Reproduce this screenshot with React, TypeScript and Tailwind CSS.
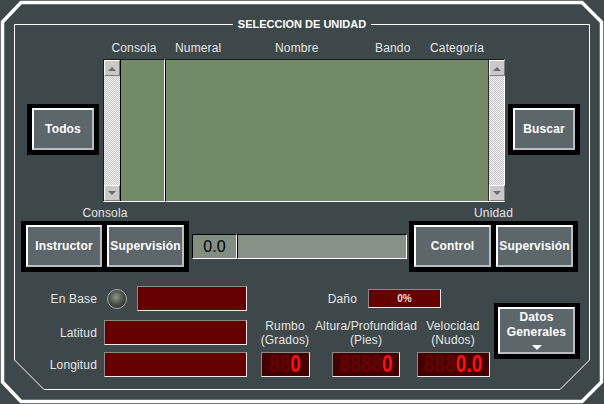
import type { ReactNode } from "react";

const FONT = "font-['Liberation_Sans',Arial,sans-serif]";

function Btn({ children, className = "" }: { children: ReactNode; className?: string }) {
  return (
    <div className={`flex flex-col items-center justify-center border-2 border-t-white border-l-white border-r-[#b9bdbf] border-b-[#b9bdbf] bg-[#5d676b] text-[12px] font-bold leading-[15px] text-white ${className}`}>
      {children}
    </div>
  );
}

function ScrollBtn({ up }: { up?: boolean }) {
  return (
    <div className="flex h-[16px] w-[16px] items-center justify-center border border-t-white border-l-white border-r-[#7c7c7c] border-b-[#7c7c7c] bg-[#c9c9c9]">
      <svg width="8" height="5" viewBox="0 0 8 5">
        <path d={up ? "M0 5 L4 1 L8 5 Z" : "M0 0 L8 0 L4 4 Z"} fill="#6b6b6b" />
      </svg>
    </div>
  );
}

function ScrollBar({ className = "" }: { className?: string }) {
  return (
    <div className={`flex w-[16px] flex-col justify-between bg-[repeating-conic-gradient(#c4c4c4_0%_25%,#f6f6f6_0%_50%)] [background-size:2px_2px] ${className}`}>
      <ScrollBtn up />
      <ScrollBtn />
    </div>
  );
}

function RedField({ className = "", children }: { className?: string; children?: ReactNode }) {
  return (
    <div className={`flex items-center justify-center border border-t-[#8a8a8a] border-l-[#8a8a8a] border-r-[#f2eaea] border-b-[#f2eaea] bg-[#660000] ${className}`}>
      {children}
    </div>
  );
}

function Led({ dim, lit, w }: { dim: string; lit: string; w: string }) {
  return (
    <div className={`flex h-[25px] items-center justify-center border border-t-[#8a8a8a] border-l-[#8a8a8a] border-r-[#f2eaea] border-b-[#f2eaea] bg-[#420000] ${w}`}>
      <span className="inline-block scale-y-[1.22] text-[19px] font-bold leading-none">
        <span className="text-[#6c0000]">{dim}</span>
        <span className="text-[#ff1010]">{lit}</span>
      </span>
    </div>
  );
}

function Gauge({ l1, l2, dim, lit, w, col }: { l1: string; l2: string; dim: string; lit: string; w: string; col: string }) {
  return (
    <div className={`flex flex-col items-center ${col}`}>
      <div className="text-center text-[12px] leading-[13.5px] text-[#e4e6e6]">
        {l1}
        <br />
        {l2}
      </div>
      <div className="mt-[5px]">
        <Led dim={dim} lit={lit} w={w} />
      </div>
    </div>
  );
}

export default function App() {
  return (
    <div className={`relative h-[404px] w-[604px] overflow-hidden bg-[#3e4749] ${FONT} tracking-[0.15px]`}>
      <svg className="absolute inset-0" width="604" height="404" viewBox="0 0 604 404">
        <polygon points="21,2.5 582,2.5 601.5,22 601.5,382 582,401.5 21,401.5 2.5,382 2.5,22" fill="none" stroke="#ffffff" strokeWidth="3.5" />
        <polygon points="14.5,24.5 589.5,24.5 589.5,360 560,389.5 44,389.5 14.5,360" fill="none" stroke="#ffffff" strokeWidth="1" />
      </svg>

      <div className="relative flex flex-col pt-[17px]">
        <div className="flex h-[14px] justify-center">
          <span className="bg-[#3e4749] px-[5px] text-[11px] font-bold leading-[14px] tracking-normal text-white">SELECCION DE UNIDAD</span>
        </div>

        <div className="mt-[10px] ml-[103px] flex h-[14px] text-[12px] leading-[14px] text-[#e4e6e6]">
          <span className="w-[62px] text-center">Consola</span>
          <span className="ml-[10px] w-[100px]">Numeral</span>
          <span className="w-[100px]">Nombre</span>
          <span className="w-[55px]">Bando</span>
          <span>Categoría</span>
        </div>

        <div className="mt-[4px] flex h-[143px] items-start">
          <div className="mt-[45px] ml-[27px] flex h-[51px] w-[72px] bg-black pt-[4px] pr-[5px] pb-[5px] pl-[5px]">
            <Btn className="flex-1">Todos</Btn>
          </div>
          <div className="ml-[4px] flex h-[143px] w-[402px]">
            <div className="flex w-[62px] border border-t-[#1c1c1c] border-l-[#1c1c1c] border-r-white border-b-white">
              <ScrollBar />
              <div className="flex-1 border-l border-l-black bg-[#738a68]" />
            </div>
            <div className="flex w-[340px] border border-t-[#1c1c1c] border-l-black border-r-white border-b-white">
              <div className="flex-1 bg-[#738a68]" />
              <ScrollBar className="border-l border-l-[#2a2a2a]" />
            </div>
          </div>
          <div className="mt-[45px] ml-[3px] flex h-[51px] w-[72px] bg-black pt-[4px] pr-[5px] pb-[5px] pl-[5px]">
            <Btn className="flex-1">Buscar</Btn>
          </div>
        </div>

        <div className="mt-[4px] flex h-[66px] items-start">
          <div className="ml-[21px] flex flex-col items-center">
            <span className="h-[14px] text-[12px] leading-[14px] text-[#e4e6e6]">Consola</span>
            <div className="mt-[1px] flex h-[51px] w-[168px] gap-[5px] bg-black pt-[4px] pr-[5px] pb-[5px] pl-[5px]">
              <Btn className="w-[76px]">Instructor</Btn>
              <Btn className="w-[77px]">Supervisión</Btn>
            </div>
          </div>
          <div className="mt-[28px] ml-[3px] flex h-[25px] w-[215px]">
            <div className="flex w-[45px] items-center justify-center border border-t-black border-l-black border-r-white border-b-white bg-[#838e83] text-[16px] leading-none text-black">0.0</div>
            <div className="flex-1 border border-t-black border-l-black border-r-white border-b-white bg-[#879286]" />
          </div>
          <div className="ml-[2px] flex flex-col items-center">
            <span className="h-[14px] text-[12px] leading-[14px] text-[#e4e6e6]">Unidad</span>
            <div className="mt-[1px] flex h-[51px] w-[169px] gap-[5px] bg-black pt-[4px] pr-[5px] pb-[5px] pl-[5px]">
              <Btn className="w-[77px]">Control</Btn>
              <Btn className="w-[77px]">Supervisión</Btn>
            </div>
          </div>
        </div>

        <div className="mt-[14px] flex items-start">
          <div className="flex w-[247px] flex-col text-[12px] text-[#e4e6e6]">
            <div className="flex h-[25px] items-center">
              <span className="w-[97px] text-right">En Base</span>
              <div className="ml-[10px] h-[20px] w-[20px] rounded-full border border-[#a4aca4] bg-[radial-gradient(circle_at_45%_40%,#8c968b_0%,#4c554c_45%,#2a302a_80%)]" />
              <RedField className="ml-[10px] h-[25px] w-[110px]" />
            </div>
            <div className="mt-[9px] flex h-[25px] items-center">
              <span className="w-[97px] text-right">Latitud</span>
              <RedField className="ml-[7px] h-[25px] w-[143px]" />
            </div>
            <div className="mt-[7px] flex h-[25px] items-center">
              <span className="w-[97px] text-right">Longitud</span>
              <RedField className="ml-[7px] h-[25px] w-[143px]" />
            </div>
          </div>

          <div className="mt-[3px] ml-[3px] flex w-[244px] flex-col">
            <div className="flex h-[19px] items-center">
              <span className="w-[107px] text-right text-[12px] text-[#e4e6e6]">Daño</span>
              <RedField className="ml-[11px] h-[19px] w-[73px]">
                <span className="text-[10px] font-bold tracking-normal text-[#f3dede]">0%</span>
              </RedField>
            </div>
            <div className="mt-[12px] flex">
              <Gauge col="w-[70px]" l1="Rumbo" l2="(Grados)" dim="88" lit="0" w="w-[49px]" />
              <Gauge col="w-[92px]" l1="Altura/Profundidad" l2="(Pies)" dim="8888" lit="0" w="w-[68px]" />
              <Gauge col="w-[82px]" l1="Velocidad" l2="(Nudos)" dim="888" lit="0.0" w="w-[73px]" />
            </div>
          </div>

          <div className="mt-[17px] flex h-[56px] w-[86px] bg-black pt-[4px] pr-[5px] pb-[5px] pl-[4px]">
            <Btn className="flex-1 justify-start pt-[1px]">
              <span>Datos</span>
              <span>Generales</span>
              <svg className="mt-[5px]" width="10" height="5" viewBox="0 0 10 5">
                <path d="M0 0 L10 0 L5 5 Z" fill="#ffffff" />
              </svg>
            </Btn>
          </div>
        </div>
      </div>
    </div>
  );
}
